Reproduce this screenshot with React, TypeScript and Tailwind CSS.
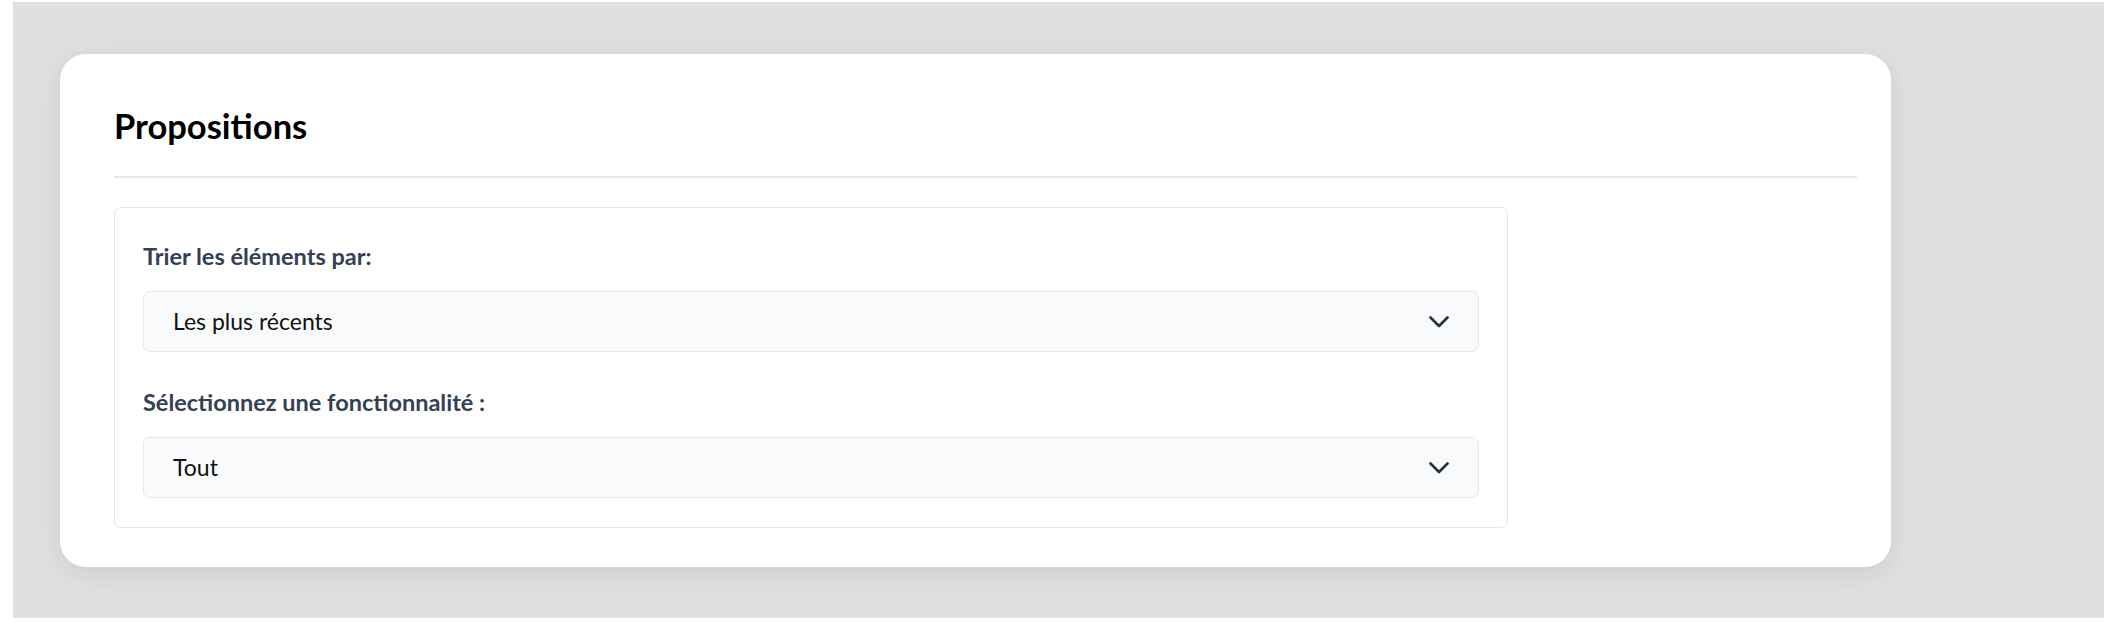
import React from 'react';

const Chevron = () => (
  <svg width="20" height="12" viewBox="0 0 20 12" fill="none" className="shrink-0">
    <path d="M1.5 1.5 10 10l8.5-8.5" stroke="#273142" strokeWidth="2.7" strokeLinecap="round" strokeLinejoin="round" />
  </svg>
);

const SelectField = ({ label, value }: { label: string; value: string }) => (
  <div className="flex flex-col">
    <label className="text-[23.5px] leading-[28px] font-bold text-[#334155]">{label}</label>
    <div className="mt-[21px] h-[61px] flex items-center justify-between pl-[29px] pr-[29px] bg-[#f9fafb] border border-[#e5e7eb] rounded-[7px]">
      <span className="text-[23px] text-[#111111]">{value}</span>
      <Chevron />
    </div>
  </div>
);

export default function App() {
  return (
    <div className="bg-white pl-[13px] pt-[2px] pb-[15px]" style={{ fontFamily: 'Lato, "Noto Sans", sans-serif' }}>
      <div className="bg-[#e0e0e0] h-[616px] pl-[47px] pt-[52px]">
        <div className="w-[1831px] h-[513px] bg-white rounded-[26px] shadow-[0_6px_28px_rgba(0,0,0,0.09)] pl-[54px] pr-[34px] pt-[52px]">
          <h1 className="text-[34.5px] leading-[40px] font-bold text-black">Propositions</h1>
          <div className="mt-[30px] h-[2px] bg-[#e6e7ea]" />
          <div className="mt-[29px] w-[1394px] h-[321px] border border-[#e3e5e8] rounded-[7px] px-[28px] pt-[34px] flex flex-col">
            <SelectField label="Trier les éléments par:" value="Les plus récents" />
            <div className="mt-[36px]">
              <SelectField label="Sélectionnez une fonctionnalité :" value="Tout" />
            </div>
          </div>
        </div>
      </div>
    </div>
  );
}
